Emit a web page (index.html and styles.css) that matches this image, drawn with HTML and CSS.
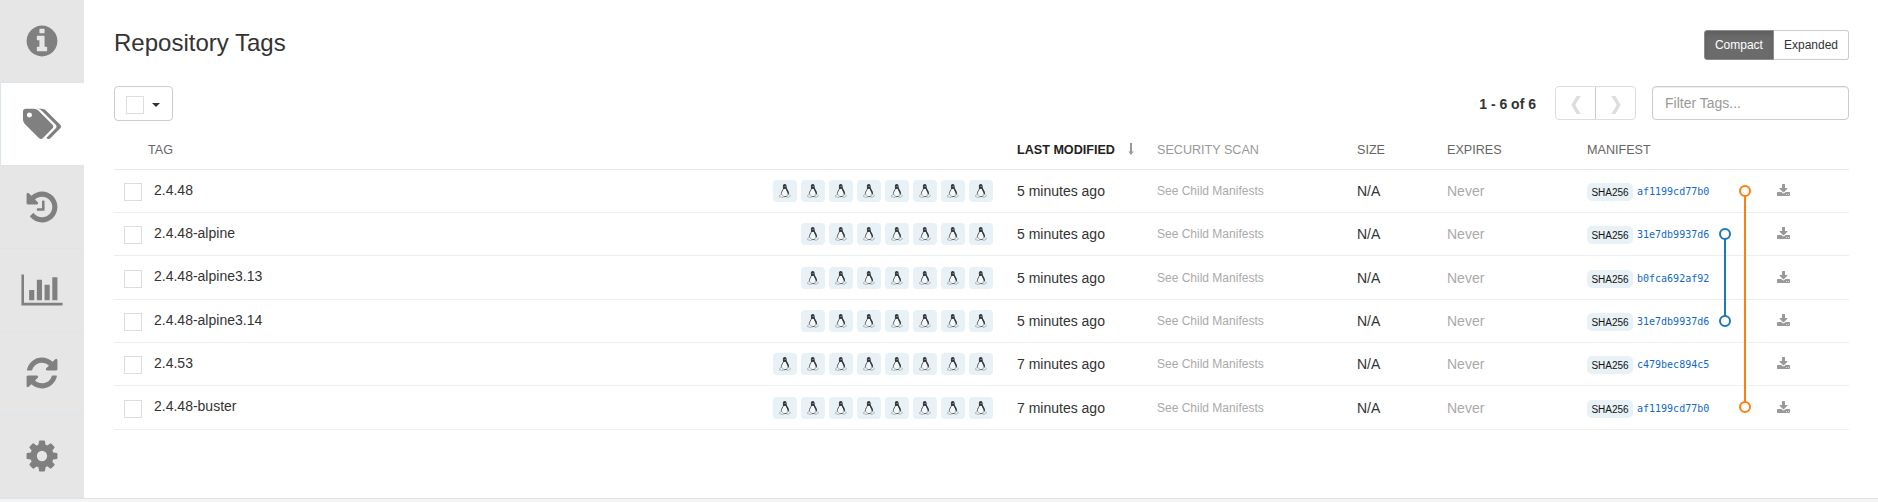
FILE: index.html
```
<!DOCTYPE html>
<html lang="en">
<head>
<meta charset="utf-8">
<title>Repository Tags</title>
<link rel="stylesheet" href="styles.css">
</head>
<body>
<svg class="defs" width="0" height="0">
  <symbol id="tux" viewBox="0 0 12 14">
    <path fill="#f4f7f8" stroke="#34383a" stroke-width=".8" d="M4.5 4.4C4 6.2 2.4 7.6 2.4 9.6 2.4 11.6 3.6 12.6 5.8 12.6S9.4 11.6 9.4 9.6C9.4 7.6 7.6 6.2 7.2 4.4Z"/>
    <path fill="#34383a" d="M5.8 0C4.3 0 3.8 1 3.9 2.4L4 4.8 4.9 4.9 5.8 4.4 6.8 4.9C7.3 6.8 8.6 7.6 8.9 10.2L9.9 10C10.1 8.2 9.2 6.2 8.1 4.8 7.5 3.8 8.2 0 5.8 0Z"/>
    <path fill="#eef2f4" stroke="#8f9699" stroke-width=".6" d="M2.2 10.3 3.6 11.2 4.8 12.6 4.2 13.5 .6 12.8 .7 11.4ZM8.4 10.3 10.2 10.5 11.5 11.9 8.7 13.6 7.8 13.2Z"/>
    <path fill="#b5babc" d="M4.8 1.9h.7v.9h-.7zM6.2 1.9h.7v.9h-.7z"/>
  </symbol>
  <symbol id="download" viewBox="64 0 1664 1536"><path d="M1344 1344q0-26-19-45t-45-19-45 19-19 45 19 45 45 19 45-19 19-45zm256 0q0-26-19-45t-45-19-45 19-19 45 19 45 45 19 45-19 19-45zm128-224v320q0 40-28 68t-68 28h-1472q-40 0-68-28t-28-68v-320q0-40 28-68t68-28h465l135 136q58 56 136 56t136-56l136-136h464q40 0 68 28t28 68zm-325-569q17 41-14 70l-448 448q-18 19-45 19t-45-19l-448-448q-31-29-14-70 17-39 59-39h256v-448q0-26 19-45t45-19h256q26 0 45 19t19 45v448h256q42 0 59 39z"/></symbol>
</svg>
<div class="page">
  <nav class="sidebar">
    <a class="side-tab"><svg width="36" height="36" viewBox="0 0 1792 1792"><path d="M1152 1376v-160q0-14-9-23t-23-9h-96v-512q0-14-9-23t-23-9h-320q-14 0-23 9t-9 23v160q0 14 9 23t23 9h96v320h-96q-14 0-23 9t-9 23v160q0 14 9 23t23 9h448q14 0 23-9t9-23zm-128-896v-160q0-14-9-23t-23-9h-192q-14 0-23 9t-9 23v160q0 14 9 23t23 9h192q14 0 23-9t9-23zm640 416q0 209-103 385.5t-279.5 279.5-385.5 103-385.5-103-279.5-279.5-103-385.5 103-385.5 279.5-279.5 385.5-103 385.5 103 279.5 279.5 103 385.5z"/></svg></a>
    <a class="side-tab active"><svg width="38" height="36" viewBox="0 0 1899 1792"><path d="M448 448q0-53-37.5-90.5t-90.5-37.5-90.5 37.5-37.5 90.5 37.5 90.5 90.5 37.5 90.5-37.5 37.5-90.5zm1067 576q0 53-37 90l-491 492q-39 37-91 37-53 0-90-37l-715-716q-38-37-64.5-101t-26.5-117v-416q0-52 38-90t90-38h416q53 0 117 26.5t102 64.5l715 714q37 39 37 91zm384 0q0 53-37 90l-491 492q-39 37-91 37-36 0-59-14t-53-45l470-470q37-37 37-90 0-52-37-91l-715-714q-38-38-102-64.5t-117-26.5h224q53 0 117 26.5t102 64.5l715 714q37 39 37 91z"/></svg></a>
    <a class="side-tab"><svg width="36" height="36" viewBox="0 0 1792 1792"><path d="M1664 896q0 156-61 298t-164 245-245 164-298 61q-172 0-327-72.5t-264-204.5q-7-10-6.5-22.5t8.5-20.5l137-138q10-9 25-9 16 2 23 12 73 95 179 147t225 52q104 0 198.5-40.5t163.5-109.5 109.5-163.5 40.5-198.5-40.5-198.5-109.5-163.5-163.5-109.5-198.5-40.5q-98 0-188 35.5t-160 101.5l137 138q31 30 14 69-17 40-59 40h-448q-26 0-45-19t-19-45v-448q0-42 40-59 39-17 69 14l130 129q107-101 244.5-156.5t284.5-55.5q156 0 298 61t245 164 164 245 61 298zm-640-288v448q0 14-9 23t-23 9h-320q-14 0-23-9t-9-23v-64q0-14 9-23t23-9h224v-352q0-14 9-23t23-9h64q14 0 23 9t9 23z"/></svg></a>
    <a class="side-tab"><svg width="42" height="36" viewBox="0 0 2048 1792"><path d="M640 896v512h-256v-512h256zm384-512v1024h-256v-1024h256zm1024 1152v128h-2048v-1536h128v1408h1920zm-640-896v768h-256v-768h256zm384-384v1152h-256v-1152h256z"/></svg></a>
    <a class="side-tab"><svg width="36" height="36" viewBox="0 0 1792 1792"><path d="M1639 1056q0 5-1 7-64 268-268 434.5t-478 166.5q-146 0-282.5-55t-243.5-157l-129 129q-19 19-45 19t-45-19-19-45v-448q0-26 19-45t45-19h448q26 0 45 19t19 45-19 45l-137 137q71 66 161 102t187 36q134 0 250-65t186-179q11-17 53-117 8-23 30-23h192q13 0 22.5 9.5t9.5 22.5zm25-800v448q0 26-19 45t-45 19h-448q-26 0-45-19t-19-45 19-45l138-138q-148-137-349-137-134 0-250 65t-186 179q-11 17-53 117-8 23-30 23h-199q-13 0-22.5-9.5t-9.5-22.5v-7q65-268 270-434.5t480-166.5q146 0 284 55.5t245 156.5l130-129q19-19 45-19t45 19 19 45z"/></svg></a>
    <a class="side-tab"><svg width="36" height="36" viewBox="0 0 1792 1792"><path d="M1152 896q0-106-75-181t-181-75-181 75-75 181 75 181 181 75 181-75 75-181zm512-109v222q0 12-8 23t-20 13l-185 28q-19 54-39 91 35 50 107 138 10 12 10 25t-9 23q-27 37-99 108t-94 71q-12 0-26-9l-138-108q-44 23-91 38-16 136-29 186-7 28-36 28h-222q-14 0-24.5-8.5t-11.5-21.5l-28-184q-49-16-90-37l-141 107q-10 9-25 9-14 0-25-11-126-114-165-168-7-10-7-23 0-12 8-23 15-21 51-66.5t54-70.5q-27-50-41-99l-183-27q-13-2-21-12.5t-8-23.5v-222q0-12 8-23t19-13l186-28q14-46 39-92-40-57-107-138-10-12-10-24 0-10 9-23 26-36 98.5-107.5t94.5-71.5q13 0 26 10l138 107q44-23 91-38 16-136 29-186 7-28 36-28h222q14 0 24.5 8.5t11.5 21.5l28 184q49 16 90 37l142-107q9-9 24-9 13 0 25 10 129 119 165 170 7 8 7 22 0 12-8 23-15 21-51 66.5t-54 70.5q26 50 41 98l183 28q13 2 21 12.5t8 23.5z"/></svg></a>
  </nav>
  <main class="content">
    <header class="title-row">
      <h1>Repository Tags</h1>
      <div class="view-toggle"><button class="view on">Compact</button><button class="view">Expanded</button></div>
    </header>
    <div class="toolbar">
      <button class="select-all"><span class="box"></span><span class="caret"></span></button>
      <div class="tools">
        <span class="count">1 - 6 of 6</span>
        <div class="pager">
          <span class="page-btn"><svg width="10" height="18" viewBox="0 0 10 18"><path d="M5.6 0H9.6L4.2 9 9.6 18H5.6L.4 9Z"/></svg></span>
          <span class="page-btn"><svg width="10" height="18" viewBox="0 0 10 18"><path d="M4.4 0H.4L5.8 9 .4 18H4.4L9.6 9Z"/></svg></span>
        </div>
        <input class="filter" type="text" placeholder="Filter Tags...">
      </div>
    </div>
    <div class="table">
      <div class="row head">
        <span class="h-tag">TAG</span><span class="sorted">LAST MODIFIED<svg width="6" height="12" viewBox="0 0 6 12"><path d="M2 0H4V8.4H5.6L3 12 .4 8.4H2Z"/></svg></span><span class="dim">SECURITY SCAN</span><span>SIZE</span><span>EXPIRES</span><span>MANIFEST</span>
      </div>
      <div class="row">
        <div class="tag"><span class="box"></span><span class="name">2.4.48</span></div>
        <div class="badges"><i><svg><use href="#tux"/></svg></i><i><svg><use href="#tux"/></svg></i><i><svg><use href="#tux"/></svg></i><i><svg><use href="#tux"/></svg></i><i><svg><use href="#tux"/></svg></i><i><svg><use href="#tux"/></svg></i><i><svg><use href="#tux"/></svg></i><i><svg><use href="#tux"/></svg></i></div>
        <span>5 minutes ago</span><span class="scan">See Child Manifests</span><span>N/A</span><span class="never">Never</span>
        <div class="manifest"><b>SHA256</b><a>af1199cd77b0</a></div><svg class="dl"><use href="#download"/></svg>
      </div>
      <div class="row">
        <div class="tag"><span class="box"></span><span class="name">2.4.48-alpine</span></div>
        <div class="badges"><i><svg><use href="#tux"/></svg></i><i><svg><use href="#tux"/></svg></i><i><svg><use href="#tux"/></svg></i><i><svg><use href="#tux"/></svg></i><i><svg><use href="#tux"/></svg></i><i><svg><use href="#tux"/></svg></i><i><svg><use href="#tux"/></svg></i></div>
        <span>5 minutes ago</span><span class="scan">See Child Manifests</span><span>N/A</span><span class="never">Never</span>
        <div class="manifest"><b>SHA256</b><a>31e7db9937d6</a></div><svg class="dl"><use href="#download"/></svg>
      </div>
      <div class="row">
        <div class="tag"><span class="box"></span><span class="name">2.4.48-alpine3.13</span></div>
        <div class="badges"><i><svg><use href="#tux"/></svg></i><i><svg><use href="#tux"/></svg></i><i><svg><use href="#tux"/></svg></i><i><svg><use href="#tux"/></svg></i><i><svg><use href="#tux"/></svg></i><i><svg><use href="#tux"/></svg></i><i><svg><use href="#tux"/></svg></i></div>
        <span>5 minutes ago</span><span class="scan">See Child Manifests</span><span>N/A</span><span class="never">Never</span>
        <div class="manifest"><b>SHA256</b><a>b0fca692af92</a></div><svg class="dl"><use href="#download"/></svg>
      </div>
      <div class="row">
        <div class="tag"><span class="box"></span><span class="name">2.4.48-alpine3.14</span></div>
        <div class="badges"><i><svg><use href="#tux"/></svg></i><i><svg><use href="#tux"/></svg></i><i><svg><use href="#tux"/></svg></i><i><svg><use href="#tux"/></svg></i><i><svg><use href="#tux"/></svg></i><i><svg><use href="#tux"/></svg></i><i><svg><use href="#tux"/></svg></i></div>
        <span>5 minutes ago</span><span class="scan">See Child Manifests</span><span>N/A</span><span class="never">Never</span>
        <div class="manifest"><b>SHA256</b><a>31e7db9937d6</a></div><svg class="dl"><use href="#download"/></svg>
      </div>
      <div class="row">
        <div class="tag"><span class="box"></span><span class="name">2.4.53</span></div>
        <div class="badges"><i><svg><use href="#tux"/></svg></i><i><svg><use href="#tux"/></svg></i><i><svg><use href="#tux"/></svg></i><i><svg><use href="#tux"/></svg></i><i><svg><use href="#tux"/></svg></i><i><svg><use href="#tux"/></svg></i><i><svg><use href="#tux"/></svg></i><i><svg><use href="#tux"/></svg></i></div>
        <span>7 minutes ago</span><span class="scan">See Child Manifests</span><span>N/A</span><span class="never">Never</span>
        <div class="manifest"><b>SHA256</b><a>c479bec894c5</a></div><svg class="dl"><use href="#download"/></svg>
      </div>
      <div class="row">
        <div class="tag"><span class="box"></span><span class="name">2.4.48-buster</span></div>
        <div class="badges"><i><svg><use href="#tux"/></svg></i><i><svg><use href="#tux"/></svg></i><i><svg><use href="#tux"/></svg></i><i><svg><use href="#tux"/></svg></i><i><svg><use href="#tux"/></svg></i><i><svg><use href="#tux"/></svg></i><i><svg><use href="#tux"/></svg></i><i><svg><use href="#tux"/></svg></i></div>
        <span>7 minutes ago</span><span class="scan">See Child Manifests</span><span>N/A</span><span class="never">Never</span>
        <div class="manifest"><b>SHA256</b><a>af1199cd77b0</a></div><svg class="dl"><use href="#download"/></svg>
      </div>
      <!-- Tracks joining tags that share a manifest -->
      <svg class="tracks" width="40" height="240" viewBox="0 0 40 240">
        <g fill="#fff" stroke-width="2">
          <g stroke="#1f77b4"><path d="M10 57V134"/><circle cx="10" cy="52" r="5"/><circle cx="10" cy="139" r="5"/></g>
          <g stroke="#ff7f0e"><path d="M30 14V220"/><circle cx="30" cy="9" r="5"/><circle cx="30" cy="225" r="5"/></g>
        </g>
      </svg>
    </div>
  </main>
</div>
</body>
</html>
```
FILE: styles.css
```
* { box-sizing: border-box; }
body { margin: 0; background: #f5f5f5; color: #333; font: 14px/20px "Liberation Sans", Arial, sans-serif; overflow: hidden; }
.defs { position: absolute; }
.page { display: flex; height: 499px; background: #fff; border-bottom: 1px solid #e2e2e2; }
.sidebar { width: 84px; flex: none; background: #e6e6e6; }
.side-tab { display: flex; align-items: center; justify-content: center; height: 83px; border-bottom: 1px solid #dde5ec; }
.side-tab svg { fill: #808080; }
.side-tab.active { background: #fff; border-left: 1px solid #dde5ec; padding-right: 1px; }
.content { flex: 1; padding: 20px 29px 0 30px; }
.title-row { display: flex; justify-content: space-between; align-items: flex-start; height: 66px; }
h1 { margin: 7px 0 0; font-size: 24px; font-weight: 400; line-height: 32px; }
.view-toggle { display: flex; margin-top: 10px; height: 30px; }
.view { border: 1px solid #ccc; border-left: 0; border-radius: 0 3px 3px 0; background: #fff; color: #333; padding: 0 10px; font: 12px/18px "Liberation Sans", Arial, sans-serif; }
.view.on { width: 70px; padding: 0; background: #6b6b6b; color: #fff; border: 1px solid #8c8c8c; border-radius: 3px 0 0 3px; box-shadow: inset 0 3px 5px rgba(0,0,0,.125); }
.toolbar { display: flex; justify-content: space-between; height: 35px; }
.box { display: block; width: 18px; height: 18px; border: 1px solid #ddd; background: #fff; flex: none; }
.select-all { display: flex; align-items: center; width: 59px; height: 35px; padding: 2px 0 0 11px; border: 1px solid #ccc; border-radius: 4px; background: #fff; }
.caret { margin: 0 0 0 8px; border: 4px solid transparent; border-top-color: #333; border-bottom: 0; }
.tools { display: flex; height: 34px; }
.count { font-weight: 700; line-height: 36px; margin-right: 19px; }
.pager { display: flex; width: 81px; margin-right: 16px; border: 1px solid #ddd; border-radius: 4px; }
.page-btn { flex: 1; display: flex; align-items: center; justify-content: center; padding-top: 4px; }
.page-btn + .page-btn { border-left: 1px solid #ccc; }
.page-btn svg { fill: #ddd; }
.filter { width: 197px; height: 34px; padding: 0 12px; border: 1px solid #ccc; border-radius: 4px; box-shadow: inset 0 1px 1px rgba(0,0,0,.075); font: 14px/20px "Liberation Sans", Arial, sans-serif; }
.filter::placeholder { color: #999; opacity: 1; }
.table { position: relative; }
.row { display: grid; grid-template-columns: 400px 503px 140px 200px 90px 140px 190px 1fr; align-items: center; height: 43.33px; border-bottom: 1px solid #eee; }
.row.head { height: 48.75px; grid-template-columns: 34px 869px 140px 200px 90px 140px 1fr; padding-top: 10px; font-size: 12.6px; line-height: 18px; color: #666; border-bottom-color: #e8e8e8; }
.h-tag { grid-column: 2; }
.sorted { color: #222; font-weight: 700; white-space: nowrap; }
.sorted svg { fill: #999; margin-left: 13px; vertical-align: -1px; }
.row .dim { color: #999; }
.tag { display: flex; align-items: center; padding-left: 10px; }
.tag .box { margin-top: 2px; }
.name { margin: -2.6px 0 0 12px; }
.badges { display: flex; justify-content: flex-end; gap: 4px; padding-right: 24px; }
.badges i { display: flex; align-items: center; justify-content: center; width: 24px; height: 22px; border-radius: 4px; background: #e8f1f6; }
.badges svg { width: 12px; height: 14px; }
.scan { color: #aaa; font-size: 12px; }
.never { color: #aaa; }
.manifest { display: flex; align-items: center; padding-top: 2px; }
.manifest b { width: 46px; height: 18px; margin-right: 4px; border-radius: 5px; background: #e8f1f6; color: #111; font-size: 10px; font-weight: 400; line-height: 19px; text-align: center; }
.manifest a { color: #1068c9; font: 10px/18px "DejaVu Sans Mono", monospace; }
.dl { width: 13px; height: 12px; fill: #999; margin-top: -2px; }
/* The tracks lie over the rows that they connect */
.tracks { position: absolute; left: 1601px; top: 61px; }
```
